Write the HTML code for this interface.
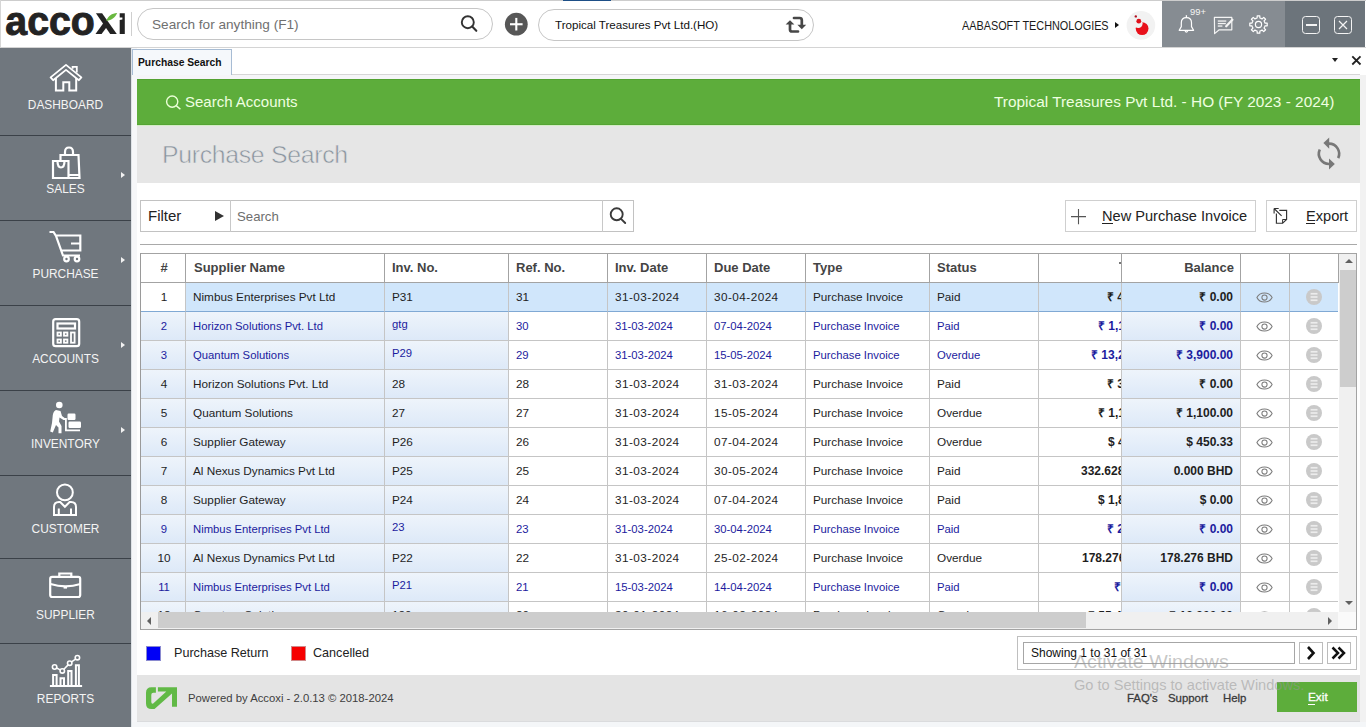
<!DOCTYPE html>
<html><head><meta charset="utf-8"><title>Purchase Search</title>
<style>
*{box-sizing:border-box}
html,body{margin:0;padding:0}
body{width:1366px;height:727px;overflow:hidden;position:relative;background:#fff;font-family:"Liberation Sans",sans-serif;color:#222}
.a{position:absolute}
.t{position:absolute;white-space:nowrap;line-height:1}
/* sidebar */
#side{position:absolute;left:0;top:48px;width:131px;height:679px;background:#70777e}
.sep{position:absolute;left:0;width:131px;height:1px;background:#3b4148}
.slab{position:absolute;left:0;width:131px;text-align:center;color:#f4f4f4;font-size:11.9px;line-height:1;white-space:nowrap}
.sarr{position:absolute;left:121px;width:0;height:0;border-top:3.5px solid transparent;border-bottom:3.5px solid transparent;border-left:4.5px solid #f2f2f2}
/* grid */
#grid{position:absolute;left:0;top:0;width:1366px;height:727px}
.hc{position:absolute;top:254px;height:29px;background:#fff;border-right:1px solid #a3a3a3;border-bottom:1px solid #a3a3a3}
.ht{position:absolute;top:260px;font-size:13px;font-weight:bold;color:#444;white-space:nowrap;line-height:15px}
.rw{position:absolute;left:0;width:1366px;height:29px}
.c{position:absolute;top:0;height:29px;border-right:1px solid #c5c5c5;border-bottom:1px solid #c5c5c5}
.wb{background:#fff}
.gb{background:linear-gradient(#eef4fb,#dde9f8)}
.sel .sb{background:#d0e6fb;border-bottom-color:#80a9d4}
.sel .wb{border-bottom-color:#80a9d4}
.tx{position:absolute;top:6px;font-size:11.75px;line-height:15px;color:#1e1e1e;white-space:nowrap}
.bl .tx{color:#1c1c9e;font-size:11.3px;top:6.5px}
.bl .up{top:4.5px}
.rw .dt{letter-spacing:0.45px}
.bl .dt{letter-spacing:0}
.mon{font-weight:bold;font-size:12px;top:7px}
.bl .mon{font-size:12px;top:7px}
.clipT{position:absolute;left:898px;top:0;width:82px;height:28px;overflow:hidden}
.clipT .tx{top:7px}
.ic{position:absolute;line-height:0}
.r12 .tx{top:4.5px}
.r12 .mon,.r12 .clipT .tx{top:6.5px}
</style></head>
<body>

<!-- ============ TOP BAR ============ -->
<div class="a" style="left:0;top:0;width:1366px;height:1px;background:#cdcdcd"></div>
<div class="a" style="left:0;top:0;width:1px;height:47px;background:#d6d6d6"></div>
<div class="a" style="left:563px;top:0;width:48px;height:1px;background:#1d4f87"></div>
<div class="a" style="left:0;top:47px;width:1366px;height:1px;background:#d4d4d4"></div>

<!-- logo -->
<svg class="a" style="left:0;top:0" width="135" height="47" viewBox="0 0 135 47">
  <text x="5.3" y="34.6" font-family="Liberation Sans" font-weight="bold" font-size="40.3" textLength="89.5" lengthAdjust="spacingAndGlyphs" fill="#232323" stroke="#232323" stroke-width="0.9">acco</text>
  <path d="M95.9 13.3 H102.1 L116.8 34 H110.2 Z" fill="#232323"/><path d="M95.5 34 H101.6 L108.6 24.6 L105.4 20.2 Z" fill="#232323"/>
  <path d="M106.3 21 C108.3 15.9 111.6 13.6 117.2 13.1 C115.2 17.6 112 20 106.3 21 Z" fill="#69b83f"/>
  <path d="M119.7 13.3 H124.8 V34 H119.7 V19.9 L122.4 19.5 V17.6 H119.7 Z" fill="#232323"/>
</svg>
<div class="a" style="left:131px;top:12px;width:1px;height:24px;background:#cfcfcf"></div>

<!-- search -->
<div class="a" style="left:137px;top:8px;width:356px;height:32px;border:1px solid #c6c6c6;border-radius:16px"></div>
<div class="t" style="left:152px;top:18px;font-size:13.6px;color:#707070">Search for anything (F1)</div>
<svg class="a" style="left:455px;top:10px" width="26" height="26" viewBox="0 0 26 26">
  <circle cx="12.8" cy="12.2" r="6" fill="none" stroke="#333" stroke-width="1.9"/>
  <line x1="17.2" y1="16.6" x2="21.3" y2="20.8" stroke="#333" stroke-width="2.1" stroke-linecap="round"/>
</svg>
<svg class="a" style="left:503px;top:11px" width="27" height="27" viewBox="0 0 27 27">
  <circle cx="13.3" cy="13.2" r="11.4" fill="#575757"/>
  <rect x="7" y="12.2" width="12.6" height="2.1" fill="#fff"/>
  <rect x="12.25" y="6.9" width="2.1" height="12.6" fill="#fff"/>
</svg>

<!-- company -->
<div class="a" style="left:538px;top:8.5px;width:276px;height:32px;border:1px solid #c6c6c6;border-radius:16px"></div>
<div class="t" style="left:555px;top:18.5px;font-size:11.6px;color:#111">Tropical Treasures Pvt Ltd.(HO)</div>
<svg class="a" style="left:782px;top:12px" width="26" height="24" viewBox="0 0 26 24">
  <path d="M8 11.5 V17.5 Q8 19.5 10 19.5 H16" fill="none" stroke="#474747" stroke-width="2.7" stroke-linecap="round"/>
  <path d="M3.6 12.6 L8 8.2 L12.4 12.6 Z" fill="#474747"/>
  <path d="M12 6 H17.6 Q19.8 6 19.8 8 V13.5" fill="none" stroke="#474747" stroke-width="2.7" stroke-linecap="round"/>
  <path d="M15.4 12.8 L19.8 17.2 L24.2 12.8 Z" fill="#474747"/>
</svg>

<!-- user -->
<div class="t" style="left:962px;top:20px;font-size:12.4px;color:#1a1a1a;transform:scaleX(0.875);transform-origin:0 0">AABASOFT TECHNOLOGIES</div>
<div class="a" style="left:1115px;top:21.5px;width:0;height:0;border-top:3.5px solid transparent;border-bottom:3.5px solid transparent;border-left:4.5px solid #111"></div>
<svg class="a" style="left:1126px;top:10px" width="30" height="31" viewBox="0 0 30 31">
  <circle cx="14.9" cy="15.4" r="14.3" fill="#f2f2f2"/>
  <circle cx="16.1" cy="18.6" r="6.4" fill="#e8101a"/>
  <circle cx="12.3" cy="13.6" r="4.3" fill="#f2f2f2"/>
  <circle cx="12.8" cy="11.2" r="2.4" fill="#e0101a"/>
  <circle cx="9.8" cy="6.4" r="1.2" fill="#b01020"/>
</svg>

<!-- right icon panels -->
<div class="a" style="left:1162px;top:1px;width:123px;height:46px;background:#868c92"></div>
<div class="a" style="left:1285px;top:1px;width:80px;height:46px;background:#6c747b"></div>
<div class="t" style="left:1190px;top:6.5px;font-size:9.4px;color:#f4f4f4">99+</div>
<svg class="a" style="left:1176px;top:12px" width="22" height="24" viewBox="0 0 22 24">
  <path d="M3.2 18.3 L5.3 14.6 V10.8 Q5.3 5.7 10.4 5.7 Q15.5 5.7 15.5 10.8 V14.6 L17.6 18.3 Z" fill="none" stroke="#fff" stroke-width="1.2" stroke-linejoin="round"/>
  <line x1="10.4" y1="3.2" x2="10.4" y2="5.6" stroke="#fff" stroke-width="1.3"/>
  <path d="M8.9 18.5 Q10.4 21.6 11.9 18.5" fill="none" stroke="#fff" stroke-width="1.2"/>
</svg>
<svg class="a" style="left:1212px;top:14px" width="24" height="22" viewBox="0 0 24 22">
  <path d="M2.4 3.4 H19.8 V15.8 H7.2 L2.6 19.6 Z" fill="none" stroke="#f4f4f4" stroke-width="1.2" stroke-linejoin="round"/>
  <rect x="5.8" y="6.4" width="8.5" height="1.3" fill="#f4f4f4"/>
  <rect x="5.8" y="8.9" width="8" height="1.3" fill="#f4f4f4"/>
  <rect x="5.8" y="11.4" width="4.6" height="1.3" fill="#f4f4f4"/>
  <path d="M14.2 12.2 L20.4 5.8" stroke="#f4f4f4" stroke-width="2.3" stroke-linecap="round"/>
</svg>
<svg class="a" style="left:1248px;top:14px" width="22" height="22" viewBox="0 0 22 22">
  <path id="gear" fill="none" stroke="#fff" stroke-width="1.2" stroke-linejoin="round" d="M7.97 4.40 L9.11 4.05 L9.19 1.80 L11.81 1.80 L11.89 4.05 L13.03 4.40 L14.08 4.96 L15.73 3.42 L17.58 5.27 L16.04 6.92 L16.60 7.97 L16.95 9.11 L19.20 9.19 L19.20 11.81 L16.95 11.89 L16.60 13.03 L16.04 14.08 L17.58 15.73 L15.73 17.58 L14.08 16.04 L13.03 16.60 L11.89 16.95 L11.81 19.20 L9.19 19.20 L9.11 16.95 L7.97 16.60 L6.92 16.04 L5.27 17.58 L3.42 15.73 L4.96 14.08 L4.40 13.03 L4.05 11.89 L1.80 11.81 L1.80 9.19 L4.05 9.11 L4.40 7.97 L4.96 6.92 L3.42 5.27 L5.27 3.42 L6.92 4.96 Z"/>
  <circle cx="10.5" cy="10.5" r="3.1" fill="none" stroke="#fff" stroke-width="1.2"/>
</svg>
<div class="a" style="left:1302px;top:16px;width:18px;height:18px;border:1.3px solid #f4f4f4;border-radius:3.5px"></div>
<div class="a" style="left:1305.5px;top:23.8px;width:11px;height:2.3px;background:#f4f4f4"></div>
<div class="a" style="left:1334px;top:16px;width:18px;height:18px;border:1.3px solid #f4f4f4;border-radius:3.5px"></div>
<svg class="a" style="left:1334px;top:16px" width="18" height="18" viewBox="0 0 18 18">
  <path d="M5 5 L13 13 M13 5 L5 13" stroke="#f4f4f4" stroke-width="1.2"/>
</svg>

<!-- ============ SIDEBAR ============ -->
<div id="side"></div>
<div class="sep" style="top:135px"></div>
<div class="sep" style="top:220px"></div>
<div class="sep" style="top:305px"></div>
<div class="sep" style="top:390px"></div>
<div class="sep" style="top:475px"></div>
<div class="sep" style="top:558px"></div>
<div class="sep" style="top:643px"></div>
<div class="slab" style="top:99.5px">DASHBOARD</div>
<div class="slab" style="top:184px">SALES</div>
<div class="slab" style="top:269px">PURCHASE</div>
<div class="slab" style="top:354px">ACCOUNTS</div>
<div class="slab" style="top:439px">INVENTORY</div>
<div class="slab" style="top:524px">CUSTOMER</div>
<div class="slab" style="top:609.5px">SUPPLIER</div>
<div class="slab" style="top:694px">REPORTS</div>
<div class="sarr" style="top:172px"></div>
<div class="sarr" style="top:257px"></div>
<div class="sarr" style="top:342px"></div>
<div class="sarr" style="top:427px"></div>

<!-- sidebar icons -->
<svg class="a" style="left:0;top:47px" width="131" height="680" viewBox="0 47 131 680" fill="none" stroke="#fff" stroke-width="2.2" stroke-linejoin="miter">
  <!-- house -->
  <path d="M50.6 77.4 L66 64.9 L81.4 77.4 L78.9 80.2 L66 69.9 L53.1 80.2 Z" stroke-width="1.8" stroke-linejoin="round"/><path d="M72.6 68.8 V66.9 H76.8 V72.6" stroke-width="1.8"/><path d="M55.9 78 V90.5 H63.3 V82.2 H69.3 V90.5 H76.2 V78" stroke-width="2"/>
  <!-- sales bags -->
  <path d="M53 161 H68.5 V178 H53 Z M57.5 161 Q57.5 167.5 61 167.5 Q64.5 167.5 64.5 161"/>
  <path d="M60.5 161 V155 H78.5 L79.5 178 H68.5 M68.5 175 H79.5 M65 155 V152 Q65 147.5 69 147.5 Q73 147.5 73 152 V155"/>
  <!-- cart -->
  <path d="M49.5 232 H53.5 L56 236 L63 255.5 H80 M55.5 235.5 H80.3 V250.5 H61.5 M71 243.5 H80"/>
  <circle cx="66.5" cy="259" r="2.3"/><circle cx="77" cy="259" r="2.3"/>
  <!-- calculator -->
  <rect x="53.2" y="319.2" width="26" height="27" rx="2.5"/>
  <rect x="57.5" y="323.5" width="17.5" height="5"/>
  <rect x="57.5" y="332.5" width="3.4" height="3.2" stroke-width="1.8"/>
  <rect x="64" y="332.5" width="3.4" height="3.2" stroke-width="1.8"/>
  <rect x="57.5" y="339.5" width="3.4" height="3.2" stroke-width="1.8"/>
  <rect x="64" y="339.5" width="3.4" height="3.2" stroke-width="1.8"/>
  <rect x="71" y="332.5" width="3.6" height="10.2" stroke-width="1.8"/>
  <!-- customer -->
  <circle cx="64.9" cy="492.4" r="7.9" stroke-width="2"/>
  <path d="M54 515 V507 Q54 502 59 502 H60.2 L64.9 506.8 L69.6 502 H71 Q76 502 76 507 V515 Z M58.8 508.5 V515 M71 508.5 V515" stroke-width="2"/>
  <!-- supplier -->
  <rect x="50.2" y="576.8" width="30" height="20.2" rx="2"/>
  <path d="M59.3 577.5 V573.5 H71.3 V577.5 M50.5 584 Q65.5 588.6 80.5 584"/><rect x="63.6" y="586" width="3.4" height="2.6" fill="#fff" stroke="none"/>
  <!-- reports -->
  <path d="M49.9 685.9 H82.1" stroke-width="2"/>
  <path d="M53.1 685 V674.9 H56.6 V685 M60.5 685 V678.2 H64 V685 M68.2 685 V671 H71.5 V685 M75.9 685 V665.3 H78.9 V685" stroke-width="2"/>
  <path d="M56.65 668.04 L60.25 669.86 M63.89 669.24 L68.11 664.86 M71.57 661.86 L75.53 659.04 " stroke-width="1.5"/>
  <circle cx="54.6" cy="667" r="2.2" stroke-width="1.6"/><circle cx="62.3" cy="670.9" r="2.2" stroke-width="1.6"/><circle cx="69.7" cy="663.2" r="2.2" stroke-width="1.6"/><circle cx="77.4" cy="657.7" r="2.2" stroke-width="1.6"/>
</svg>
<!-- inventory (filled) -->
<svg class="a" style="left:0;top:395px" width="131" height="50" viewBox="0 395 131 50">
  <g fill="#fff">
    <circle cx="59.3" cy="405" r="3.3"/>
    <path d="M56 410 Q53.5 411 52.8 415 L52 423 L50.2 431.5 L52.8 432.5 L56 425 L58.5 427.5 L58.5 433.3 H61.5 V426 L59 421.5 L59.5 417.5 L63.5 420 H65 V418.2 L62 416 L60.5 411 Z"/>
    <rect x="67.5" y="413.5" width="8" height="6.5" rx="1.2"/>
    <rect x="68.5" y="421.5" width="12.5" height="6.5" rx="1.2"/>
    <path d="M65 418 H66.8 V429.5 H80 V431.2 H65 Z"/>
  </g>
</svg>

<!-- ============ CONTENT ============ -->
<div class="a" style="left:131px;top:48px;width:1px;height:679px;background:#dfe3e7"></div>
<div class="a" style="left:132px;top:48px;width:5px;height:679px;background:#f6f7f9"></div>
<div class="a" style="left:1360px;top:75px;width:6px;height:652px;background:#f2f2f2"></div>
<div class="a" style="left:231px;top:74px;width:1129px;height:1px;background:#d6d6d6"></div>
<!-- tab -->
<div class="a" style="left:132px;top:49px;width:100px;height:26px;border:1px solid #a7bcd4;border-bottom:none;background:#f5f8fb"></div>
<div class="t" style="left:138px;top:58px;font-size:10.3px;font-weight:bold;color:#111">Purchase Search</div>
<div class="a" style="left:1332px;top:58px;width:0;height:0;border-left:3.5px solid transparent;border-right:3.5px solid transparent;border-top:4px solid #222"></div>
<svg class="a" style="left:1350px;top:54px" width="13" height="13" viewBox="0 0 13 13">
  <path d="M2.3 2.3 L10.5 10.5 M10.5 2.3 L2.3 10.5" stroke="#222" stroke-width="1.8"/>
</svg>

<!-- green bar -->
<div class="a" style="left:137px;top:75px;width:1223px;height:4px;background:#f5f5f8"></div>
<div class="a" style="left:137px;top:79px;width:1223px;height:46px;background:#5dad3b;border-top:1px solid #53a232;border-bottom:1px solid #55a434"></div>
<svg class="a" style="left:164px;top:93px" width="20" height="20" viewBox="0 0 20 20">
  <circle cx="8.2" cy="8.6" r="5.6" fill="none" stroke="#ecffd8" stroke-width="1.4"/>
  <line x1="12.2" y1="12.6" x2="16.4" y2="16.3" stroke="#ecffd8" stroke-width="1.5"/>
</svg>
<div class="t" style="left:185px;top:93.5px;font-size:15px;color:#efffe0">Search Accounts</div>
<div class="t" style="left:994px;top:93.5px;font-size:15.4px;color:#efffe0">Tropical Treasures Pvt Ltd. - HO (FY 2023 - 2024)</div>

<!-- grey header -->
<div class="a" style="left:137px;top:125px;width:1223px;height:1px;background:#d3ecc6"></div>
<div class="a" style="left:137px;top:126px;width:1223px;height:57px;background:#e6e6e6"></div>
<div class="t" style="left:162px;top:143px;font-size:24.8px;color:#8a949e;letter-spacing:-0.3px;-webkit-text-stroke:0.55px #e6e6e6">Purchase Search</div>
<svg class="a" style="left:1305px;top:130px" width="48" height="48" viewBox="0 0 48 48">
  <path d="M24 13.6 A10.2 10.2 0 0 1 33.2 28.1" fill="none" stroke="#787878" stroke-width="2.6"/>
  <path d="M18.4 13.1 L24.2 7.6 V18.8 Z" fill="#787878"/>
  <path d="M14.8 19.5 A10.2 10.2 0 0 0 24 34" fill="none" stroke="#787878" stroke-width="2.6"/>
  <path d="M29.8 34 L24 28.4 V39.6 Z" fill="#787878"/>
</svg>

<!-- filter row -->
<div class="a" style="left:140px;top:200px;width:494px;height:32px;border:1px solid #c2c2c2"></div>
<div class="a" style="left:230px;top:200px;width:1px;height:32px;background:#c8c8c8"></div>
<div class="a" style="left:602px;top:200px;width:1px;height:32px;background:#c8c8c8"></div>
<div class="t" style="left:148px;top:207.5px;font-size:15px;color:#222">Filter</div>
<div class="a" style="left:215px;top:211px;width:0;height:0;border-top:5px solid transparent;border-bottom:5px solid transparent;border-left:9px solid #333"></div>
<div class="t" style="left:237px;top:209.5px;font-size:13.2px;color:#6e6e6e">Search</div>
<svg class="a" style="left:606px;top:203px" width="24" height="24" viewBox="0 0 24 24">
  <circle cx="10.7" cy="11.3" r="6" fill="none" stroke="#3a3a3a" stroke-width="1.9"/>
  <line x1="15" y1="15.8" x2="19.2" y2="20" stroke="#3a3a3a" stroke-width="1.9" stroke-linecap="round"/>
</svg>

<div class="a" style="left:1065px;top:200px;width:191px;height:32px;border:1px solid #cfcfcf"></div>
<svg class="a" style="left:1070px;top:208px" width="18" height="18" viewBox="0 0 18 18">
  <path d="M1 8.6 H16 M8.5 1 V16.2" stroke="#555" stroke-width="1.1"/>
</svg>
<div class="t" style="left:1102px;top:208.5px;font-size:14.6px;color:#222">New Purchase Invoice</div>
<div class="a" style="left:1102px;top:223px;width:10.5px;height:1px;background:#222"></div>
<div class="a" style="left:1266px;top:200px;width:91px;height:32px;border:1px solid #cfcfcf"></div>
<svg class="a" style="left:1266px;top:202px" width="30" height="28" viewBox="0 0 30 28">
  <path d="M8.1 6.5 L15.6 13.9 M8.1 6.5 H12.7 M8.1 6.5 V11.4" fill="none" stroke="#333" stroke-width="1.15"/>
  <path d="M13.3 8.3 H20.6 V17.5 L16.6 21.2 H10.4 V11.6" fill="none" stroke="#333" stroke-width="1.15"/>
  <path d="M16.6 21.2 V17.5 H20.6" fill="none" stroke="#333" stroke-width="1"/>
</svg>
<div class="t" style="left:1306px;top:208.5px;font-size:14.6px;color:#222">Export</div>
<div class="a" style="left:1306px;top:223px;width:9px;height:1px;background:#222"></div>

<div class="a" style="left:140px;top:244px;width:1217px;height:1px;background:#a9a9a9"></div>

<!-- ============ TABLE ============ -->
<div class="a" style="left:140px;top:253px;width:1217px;height:377px;border:1px solid #a3a3a3;border-left:2px solid #9a9a9a"></div>
<div class="hc" style="left:141px;width:45px"></div><div class="hc" style="left:186px;width:199px"></div><div class="hc" style="left:385px;width:124px"></div><div class="hc" style="left:509px;width:99px"></div><div class="hc" style="left:608px;width:99px"></div><div class="hc" style="left:707px;width:99px"></div><div class="hc" style="left:806px;width:124px"></div><div class="hc" style="left:930px;width:109px"></div><div class="hc" style="left:1039px;width:83px"></div><div class="hc" style="left:1122px;width:119px"></div><div class="hc" style="left:1241px;width:49px"></div><div class="hc" style="left:1290px;width:49px"></div><span class="ht" style="left:142px;width:44px;text-align:center">#</span><span class="ht" style="left:194px">Supplier Name</span><span class="ht" style="left:392px">Inv. No.</span><span class="ht" style="left:516px">Ref. No.</span><span class="ht" style="left:615px">Inv. Date</span><span class="ht" style="left:714px">Due Date</span><span class="ht" style="left:813px">Type</span><span class="ht" style="left:937px">Status</span><span class="ht" style="left:1121px;width:113px;text-align:right">Balance</span><span class="a" style="left:1119px;top:262px;width:2px;height:2px;background:#777"></span>
<div class="a" style="left:141px;top:283px;width:1197px;height:329px;overflow:hidden">
<div class="rw sel" style="top:0px"><div class="c wb" style="left:0px;width:45px"></div><div class="c sb" style="left:45px;width:199px"></div><div class="c sb" style="left:244px;width:124px"></div><div class="c sb" style="left:368px;width:99px"></div><div class="c sb" style="left:467px;width:99px"></div><div class="c sb" style="left:566px;width:99px"></div><div class="c sb" style="left:665px;width:124px"></div><div class="c sb" style="left:789px;width:109px"></div><div class="c sb" style="left:898px;width:83px"></div><div class="c sb" style="left:981px;width:119px"></div><div class="c sb" style="left:1100px;width:49px"></div><div class="c sb" style="left:1149px;width:49px"></div><span class="tx" style="left:1px;width:44px;text-align:center">1</span><span class="tx" style="left:52px">Nimbus Enterprises Pvt Ltd</span><span class="tx" style="left:251px">P31</span><span class="tx" style="left:375px">31</span><span class="tx dt" style="left:474px">31-03-2024</span><span class="tx dt" style="left:573px">30-04-2024</span><span class="tx" style="left:672px">Purchase Invoice</span><span class="tx" style="left:796px">Paid</span><div class="clipT"><span class="tx mon" style="left:68px">₹ 4,130.00</span></div><span class="tx mon" style="left:980px;width:112px;text-align:right">₹ 0.00</span><span class="ic" style="left:1115px;top:9px"><svg width="17" height="11" viewBox="0 0 17 11"><path d="M0.9 5.5 C3.8 -0.6 13.2 -0.6 16.1 5.5 C13.2 11.6 3.8 11.6 0.9 5.5 Z" fill="none" stroke="#7c7c7c" stroke-width="1.05"/><circle cx="8.5" cy="5.5" r="2.6" fill="none" stroke="#7c7c7c" stroke-width="1.05"/></svg></span><span class="ic" style="left:1165px;top:6px"><svg width="16" height="16" viewBox="0 0 16 16"><circle cx="8" cy="8" r="8" fill="#c9c9c9"/><rect x="4.6" y="3.9" width="6.9" height="1.7" fill="#ececec"/><rect x="4.6" y="7.15" width="6.9" height="1.7" fill="#ececec"/><rect x="4.6" y="10.4" width="6.9" height="1.7" fill="#ececec"/></svg></span></div><div class="rw bl" style="top:29px"><div class="c gb" style="left:0px;width:45px"></div><div class="c gb" style="left:45px;width:199px"></div><div class="c gb" style="left:244px;width:124px"></div><div class="c wb" style="left:368px;width:99px"></div><div class="c wb" style="left:467px;width:99px"></div><div class="c wb" style="left:566px;width:99px"></div><div class="c wb" style="left:665px;width:124px"></div><div class="c wb" style="left:789px;width:109px"></div><div class="c wb" style="left:898px;width:83px"></div><div class="c gb" style="left:981px;width:119px"></div><div class="c wb" style="left:1100px;width:49px"></div><div class="c wb" style="left:1149px;width:49px"></div><span class="tx" style="left:1px;width:44px;text-align:center">2</span><span class="tx" style="left:52px">Horizon Solutions Pvt. Ltd</span><span class="tx up" style="left:251px">gtg</span><span class="tx" style="left:375px">30</span><span class="tx dt" style="left:474px">31-03-2024</span><span class="tx dt" style="left:573px">07-04-2024</span><span class="tx" style="left:672px">Purchase Invoice</span><span class="tx" style="left:796px">Paid</span><div class="clipT"><span class="tx mon" style="left:59px">₹ 1,180.00</span></div><span class="tx mon" style="left:980px;width:112px;text-align:right">₹ 0.00</span><span class="ic" style="left:1115px;top:9px"><svg width="17" height="11" viewBox="0 0 17 11"><path d="M0.9 5.5 C3.8 -0.6 13.2 -0.6 16.1 5.5 C13.2 11.6 3.8 11.6 0.9 5.5 Z" fill="none" stroke="#7c7c7c" stroke-width="1.05"/><circle cx="8.5" cy="5.5" r="2.6" fill="none" stroke="#7c7c7c" stroke-width="1.05"/></svg></span><span class="ic" style="left:1165px;top:6px"><svg width="16" height="16" viewBox="0 0 16 16"><circle cx="8" cy="8" r="8" fill="#c9c9c9"/><rect x="4.6" y="3.9" width="6.9" height="1.7" fill="#ececec"/><rect x="4.6" y="7.15" width="6.9" height="1.7" fill="#ececec"/><rect x="4.6" y="10.4" width="6.9" height="1.7" fill="#ececec"/></svg></span></div><div class="rw bl" style="top:58px"><div class="c gb" style="left:0px;width:45px"></div><div class="c gb" style="left:45px;width:199px"></div><div class="c gb" style="left:244px;width:124px"></div><div class="c wb" style="left:368px;width:99px"></div><div class="c wb" style="left:467px;width:99px"></div><div class="c wb" style="left:566px;width:99px"></div><div class="c wb" style="left:665px;width:124px"></div><div class="c wb" style="left:789px;width:109px"></div><div class="c wb" style="left:898px;width:83px"></div><div class="c gb" style="left:981px;width:119px"></div><div class="c wb" style="left:1100px;width:49px"></div><div class="c wb" style="left:1149px;width:49px"></div><span class="tx" style="left:1px;width:44px;text-align:center">3</span><span class="tx" style="left:52px">Quantum Solutions</span><span class="tx up" style="left:251px">P29</span><span class="tx" style="left:375px">29</span><span class="tx dt" style="left:474px">31-03-2024</span><span class="tx dt" style="left:573px">15-05-2024</span><span class="tx" style="left:672px">Purchase Invoice</span><span class="tx" style="left:796px">Overdue</span><div class="clipT"><span class="tx mon" style="left:52px">₹ 13,280.00</span></div><span class="tx mon" style="left:980px;width:112px;text-align:right">₹ 3,900.00</span><span class="ic" style="left:1115px;top:9px"><svg width="17" height="11" viewBox="0 0 17 11"><path d="M0.9 5.5 C3.8 -0.6 13.2 -0.6 16.1 5.5 C13.2 11.6 3.8 11.6 0.9 5.5 Z" fill="none" stroke="#7c7c7c" stroke-width="1.05"/><circle cx="8.5" cy="5.5" r="2.6" fill="none" stroke="#7c7c7c" stroke-width="1.05"/></svg></span><span class="ic" style="left:1165px;top:6px"><svg width="16" height="16" viewBox="0 0 16 16"><circle cx="8" cy="8" r="8" fill="#c9c9c9"/><rect x="4.6" y="3.9" width="6.9" height="1.7" fill="#ececec"/><rect x="4.6" y="7.15" width="6.9" height="1.7" fill="#ececec"/><rect x="4.6" y="10.4" width="6.9" height="1.7" fill="#ececec"/></svg></span></div><div class="rw" style="top:87px"><div class="c gb" style="left:0px;width:45px"></div><div class="c gb" style="left:45px;width:199px"></div><div class="c gb" style="left:244px;width:124px"></div><div class="c wb" style="left:368px;width:99px"></div><div class="c wb" style="left:467px;width:99px"></div><div class="c wb" style="left:566px;width:99px"></div><div class="c wb" style="left:665px;width:124px"></div><div class="c wb" style="left:789px;width:109px"></div><div class="c wb" style="left:898px;width:83px"></div><div class="c gb" style="left:981px;width:119px"></div><div class="c wb" style="left:1100px;width:49px"></div><div class="c wb" style="left:1149px;width:49px"></div><span class="tx" style="left:1px;width:44px;text-align:center">4</span><span class="tx" style="left:52px">Horizon Solutions Pvt. Ltd</span><span class="tx" style="left:251px">28</span><span class="tx" style="left:375px">28</span><span class="tx dt" style="left:474px">31-03-2024</span><span class="tx dt" style="left:573px">31-03-2024</span><span class="tx" style="left:672px">Purchase Invoice</span><span class="tx" style="left:796px">Paid</span><div class="clipT"><span class="tx mon" style="left:68px">₹ 3,540.00</span></div><span class="tx mon" style="left:980px;width:112px;text-align:right">₹ 0.00</span><span class="ic" style="left:1115px;top:9px"><svg width="17" height="11" viewBox="0 0 17 11"><path d="M0.9 5.5 C3.8 -0.6 13.2 -0.6 16.1 5.5 C13.2 11.6 3.8 11.6 0.9 5.5 Z" fill="none" stroke="#7c7c7c" stroke-width="1.05"/><circle cx="8.5" cy="5.5" r="2.6" fill="none" stroke="#7c7c7c" stroke-width="1.05"/></svg></span><span class="ic" style="left:1165px;top:6px"><svg width="16" height="16" viewBox="0 0 16 16"><circle cx="8" cy="8" r="8" fill="#c9c9c9"/><rect x="4.6" y="3.9" width="6.9" height="1.7" fill="#ececec"/><rect x="4.6" y="7.15" width="6.9" height="1.7" fill="#ececec"/><rect x="4.6" y="10.4" width="6.9" height="1.7" fill="#ececec"/></svg></span></div><div class="rw" style="top:116px"><div class="c gb" style="left:0px;width:45px"></div><div class="c gb" style="left:45px;width:199px"></div><div class="c gb" style="left:244px;width:124px"></div><div class="c wb" style="left:368px;width:99px"></div><div class="c wb" style="left:467px;width:99px"></div><div class="c wb" style="left:566px;width:99px"></div><div class="c wb" style="left:665px;width:124px"></div><div class="c wb" style="left:789px;width:109px"></div><div class="c wb" style="left:898px;width:83px"></div><div class="c gb" style="left:981px;width:119px"></div><div class="c wb" style="left:1100px;width:49px"></div><div class="c wb" style="left:1149px;width:49px"></div><span class="tx" style="left:1px;width:44px;text-align:center">5</span><span class="tx" style="left:52px">Quantum Solutions</span><span class="tx" style="left:251px">27</span><span class="tx" style="left:375px">27</span><span class="tx dt" style="left:474px">31-03-2024</span><span class="tx dt" style="left:573px">15-05-2024</span><span class="tx" style="left:672px">Purchase Invoice</span><span class="tx" style="left:796px">Overdue</span><div class="clipT"><span class="tx mon" style="left:59px">₹ 1,100.00</span></div><span class="tx mon" style="left:980px;width:112px;text-align:right">₹ 1,100.00</span><span class="ic" style="left:1115px;top:9px"><svg width="17" height="11" viewBox="0 0 17 11"><path d="M0.9 5.5 C3.8 -0.6 13.2 -0.6 16.1 5.5 C13.2 11.6 3.8 11.6 0.9 5.5 Z" fill="none" stroke="#7c7c7c" stroke-width="1.05"/><circle cx="8.5" cy="5.5" r="2.6" fill="none" stroke="#7c7c7c" stroke-width="1.05"/></svg></span><span class="ic" style="left:1165px;top:6px"><svg width="16" height="16" viewBox="0 0 16 16"><circle cx="8" cy="8" r="8" fill="#c9c9c9"/><rect x="4.6" y="3.9" width="6.9" height="1.7" fill="#ececec"/><rect x="4.6" y="7.15" width="6.9" height="1.7" fill="#ececec"/><rect x="4.6" y="10.4" width="6.9" height="1.7" fill="#ececec"/></svg></span></div><div class="rw" style="top:145px"><div class="c gb" style="left:0px;width:45px"></div><div class="c gb" style="left:45px;width:199px"></div><div class="c gb" style="left:244px;width:124px"></div><div class="c wb" style="left:368px;width:99px"></div><div class="c wb" style="left:467px;width:99px"></div><div class="c wb" style="left:566px;width:99px"></div><div class="c wb" style="left:665px;width:124px"></div><div class="c wb" style="left:789px;width:109px"></div><div class="c wb" style="left:898px;width:83px"></div><div class="c gb" style="left:981px;width:119px"></div><div class="c wb" style="left:1100px;width:49px"></div><div class="c wb" style="left:1149px;width:49px"></div><span class="tx" style="left:1px;width:44px;text-align:center">6</span><span class="tx" style="left:52px">Supplier Gateway</span><span class="tx" style="left:251px">P26</span><span class="tx" style="left:375px">26</span><span class="tx dt" style="left:474px">31-03-2024</span><span class="tx dt" style="left:573px">07-04-2024</span><span class="tx" style="left:672px">Purchase Invoice</span><span class="tx" style="left:796px">Overdue</span><div class="clipT"><span class="tx mon" style="left:69px">$ 450.33</span></div><span class="tx mon" style="left:980px;width:112px;text-align:right">$ 450.33</span><span class="ic" style="left:1115px;top:9px"><svg width="17" height="11" viewBox="0 0 17 11"><path d="M0.9 5.5 C3.8 -0.6 13.2 -0.6 16.1 5.5 C13.2 11.6 3.8 11.6 0.9 5.5 Z" fill="none" stroke="#7c7c7c" stroke-width="1.05"/><circle cx="8.5" cy="5.5" r="2.6" fill="none" stroke="#7c7c7c" stroke-width="1.05"/></svg></span><span class="ic" style="left:1165px;top:6px"><svg width="16" height="16" viewBox="0 0 16 16"><circle cx="8" cy="8" r="8" fill="#c9c9c9"/><rect x="4.6" y="3.9" width="6.9" height="1.7" fill="#ececec"/><rect x="4.6" y="7.15" width="6.9" height="1.7" fill="#ececec"/><rect x="4.6" y="10.4" width="6.9" height="1.7" fill="#ececec"/></svg></span></div><div class="rw" style="top:174px"><div class="c gb" style="left:0px;width:45px"></div><div class="c gb" style="left:45px;width:199px"></div><div class="c gb" style="left:244px;width:124px"></div><div class="c wb" style="left:368px;width:99px"></div><div class="c wb" style="left:467px;width:99px"></div><div class="c wb" style="left:566px;width:99px"></div><div class="c wb" style="left:665px;width:124px"></div><div class="c wb" style="left:789px;width:109px"></div><div class="c wb" style="left:898px;width:83px"></div><div class="c gb" style="left:981px;width:119px"></div><div class="c wb" style="left:1100px;width:49px"></div><div class="c wb" style="left:1149px;width:49px"></div><span class="tx" style="left:1px;width:44px;text-align:center">7</span><span class="tx" style="left:52px">Al Nexus Dynamics Pvt Ltd</span><span class="tx" style="left:251px">P25</span><span class="tx" style="left:375px">25</span><span class="tx dt" style="left:474px">31-03-2024</span><span class="tx dt" style="left:573px">30-05-2024</span><span class="tx" style="left:672px">Purchase Invoice</span><span class="tx" style="left:796px">Paid</span><div class="clipT"><span class="tx mon" style="left:42px">332.628 BHD</span></div><span class="tx mon" style="left:980px;width:112px;text-align:right">0.000 BHD</span><span class="ic" style="left:1115px;top:9px"><svg width="17" height="11" viewBox="0 0 17 11"><path d="M0.9 5.5 C3.8 -0.6 13.2 -0.6 16.1 5.5 C13.2 11.6 3.8 11.6 0.9 5.5 Z" fill="none" stroke="#7c7c7c" stroke-width="1.05"/><circle cx="8.5" cy="5.5" r="2.6" fill="none" stroke="#7c7c7c" stroke-width="1.05"/></svg></span><span class="ic" style="left:1165px;top:6px"><svg width="16" height="16" viewBox="0 0 16 16"><circle cx="8" cy="8" r="8" fill="#c9c9c9"/><rect x="4.6" y="3.9" width="6.9" height="1.7" fill="#ececec"/><rect x="4.6" y="7.15" width="6.9" height="1.7" fill="#ececec"/><rect x="4.6" y="10.4" width="6.9" height="1.7" fill="#ececec"/></svg></span></div><div class="rw" style="top:203px"><div class="c gb" style="left:0px;width:45px"></div><div class="c gb" style="left:45px;width:199px"></div><div class="c gb" style="left:244px;width:124px"></div><div class="c wb" style="left:368px;width:99px"></div><div class="c wb" style="left:467px;width:99px"></div><div class="c wb" style="left:566px;width:99px"></div><div class="c wb" style="left:665px;width:124px"></div><div class="c wb" style="left:789px;width:109px"></div><div class="c wb" style="left:898px;width:83px"></div><div class="c gb" style="left:981px;width:119px"></div><div class="c wb" style="left:1100px;width:49px"></div><div class="c wb" style="left:1149px;width:49px"></div><span class="tx" style="left:1px;width:44px;text-align:center">8</span><span class="tx" style="left:52px">Supplier Gateway</span><span class="tx" style="left:251px">P24</span><span class="tx" style="left:375px">24</span><span class="tx dt" style="left:474px">31-03-2024</span><span class="tx dt" style="left:573px">07-04-2024</span><span class="tx" style="left:672px">Purchase Invoice</span><span class="tx" style="left:796px">Paid</span><div class="clipT"><span class="tx mon" style="left:59px">$ 1,850.00</span></div><span class="tx mon" style="left:980px;width:112px;text-align:right">$ 0.00</span><span class="ic" style="left:1115px;top:9px"><svg width="17" height="11" viewBox="0 0 17 11"><path d="M0.9 5.5 C3.8 -0.6 13.2 -0.6 16.1 5.5 C13.2 11.6 3.8 11.6 0.9 5.5 Z" fill="none" stroke="#7c7c7c" stroke-width="1.05"/><circle cx="8.5" cy="5.5" r="2.6" fill="none" stroke="#7c7c7c" stroke-width="1.05"/></svg></span><span class="ic" style="left:1165px;top:6px"><svg width="16" height="16" viewBox="0 0 16 16"><circle cx="8" cy="8" r="8" fill="#c9c9c9"/><rect x="4.6" y="3.9" width="6.9" height="1.7" fill="#ececec"/><rect x="4.6" y="7.15" width="6.9" height="1.7" fill="#ececec"/><rect x="4.6" y="10.4" width="6.9" height="1.7" fill="#ececec"/></svg></span></div><div class="rw bl" style="top:232px"><div class="c gb" style="left:0px;width:45px"></div><div class="c gb" style="left:45px;width:199px"></div><div class="c gb" style="left:244px;width:124px"></div><div class="c wb" style="left:368px;width:99px"></div><div class="c wb" style="left:467px;width:99px"></div><div class="c wb" style="left:566px;width:99px"></div><div class="c wb" style="left:665px;width:124px"></div><div class="c wb" style="left:789px;width:109px"></div><div class="c wb" style="left:898px;width:83px"></div><div class="c gb" style="left:981px;width:119px"></div><div class="c wb" style="left:1100px;width:49px"></div><div class="c wb" style="left:1149px;width:49px"></div><span class="tx" style="left:1px;width:44px;text-align:center">9</span><span class="tx" style="left:52px">Nimbus Enterprises Pvt Ltd</span><span class="tx up" style="left:251px">23</span><span class="tx" style="left:375px">23</span><span class="tx dt" style="left:474px">31-03-2024</span><span class="tx dt" style="left:573px">30-04-2024</span><span class="tx" style="left:672px">Purchase Invoice</span><span class="tx" style="left:796px">Paid</span><div class="clipT"><span class="tx mon" style="left:68px">₹ 2,360.00</span></div><span class="tx mon" style="left:980px;width:112px;text-align:right">₹ 0.00</span><span class="ic" style="left:1115px;top:9px"><svg width="17" height="11" viewBox="0 0 17 11"><path d="M0.9 5.5 C3.8 -0.6 13.2 -0.6 16.1 5.5 C13.2 11.6 3.8 11.6 0.9 5.5 Z" fill="none" stroke="#7c7c7c" stroke-width="1.05"/><circle cx="8.5" cy="5.5" r="2.6" fill="none" stroke="#7c7c7c" stroke-width="1.05"/></svg></span><span class="ic" style="left:1165px;top:6px"><svg width="16" height="16" viewBox="0 0 16 16"><circle cx="8" cy="8" r="8" fill="#c9c9c9"/><rect x="4.6" y="3.9" width="6.9" height="1.7" fill="#ececec"/><rect x="4.6" y="7.15" width="6.9" height="1.7" fill="#ececec"/><rect x="4.6" y="10.4" width="6.9" height="1.7" fill="#ececec"/></svg></span></div><div class="rw" style="top:261px"><div class="c gb" style="left:0px;width:45px"></div><div class="c gb" style="left:45px;width:199px"></div><div class="c gb" style="left:244px;width:124px"></div><div class="c wb" style="left:368px;width:99px"></div><div class="c wb" style="left:467px;width:99px"></div><div class="c wb" style="left:566px;width:99px"></div><div class="c wb" style="left:665px;width:124px"></div><div class="c wb" style="left:789px;width:109px"></div><div class="c wb" style="left:898px;width:83px"></div><div class="c gb" style="left:981px;width:119px"></div><div class="c wb" style="left:1100px;width:49px"></div><div class="c wb" style="left:1149px;width:49px"></div><span class="tx" style="left:1px;width:44px;text-align:center">10</span><span class="tx" style="left:52px">Al Nexus Dynamics Pvt Ltd</span><span class="tx" style="left:251px">P22</span><span class="tx" style="left:375px">22</span><span class="tx dt" style="left:474px">31-03-2024</span><span class="tx dt" style="left:573px">25-02-2024</span><span class="tx" style="left:672px">Purchase Invoice</span><span class="tx" style="left:796px">Overdue</span><div class="clipT"><span class="tx mon" style="left:43px">178.276 BHD</span></div><span class="tx mon" style="left:980px;width:112px;text-align:right">178.276 BHD</span><span class="ic" style="left:1115px;top:9px"><svg width="17" height="11" viewBox="0 0 17 11"><path d="M0.9 5.5 C3.8 -0.6 13.2 -0.6 16.1 5.5 C13.2 11.6 3.8 11.6 0.9 5.5 Z" fill="none" stroke="#7c7c7c" stroke-width="1.05"/><circle cx="8.5" cy="5.5" r="2.6" fill="none" stroke="#7c7c7c" stroke-width="1.05"/></svg></span><span class="ic" style="left:1165px;top:6px"><svg width="16" height="16" viewBox="0 0 16 16"><circle cx="8" cy="8" r="8" fill="#c9c9c9"/><rect x="4.6" y="3.9" width="6.9" height="1.7" fill="#ececec"/><rect x="4.6" y="7.15" width="6.9" height="1.7" fill="#ececec"/><rect x="4.6" y="10.4" width="6.9" height="1.7" fill="#ececec"/></svg></span></div><div class="rw bl" style="top:290px"><div class="c gb" style="left:0px;width:45px"></div><div class="c gb" style="left:45px;width:199px"></div><div class="c gb" style="left:244px;width:124px"></div><div class="c wb" style="left:368px;width:99px"></div><div class="c wb" style="left:467px;width:99px"></div><div class="c wb" style="left:566px;width:99px"></div><div class="c wb" style="left:665px;width:124px"></div><div class="c wb" style="left:789px;width:109px"></div><div class="c wb" style="left:898px;width:83px"></div><div class="c gb" style="left:981px;width:119px"></div><div class="c wb" style="left:1100px;width:49px"></div><div class="c wb" style="left:1149px;width:49px"></div><span class="tx" style="left:1px;width:44px;text-align:center">11</span><span class="tx" style="left:52px">Nimbus Enterprises Pvt Ltd</span><span class="tx up" style="left:251px">P21</span><span class="tx" style="left:375px">21</span><span class="tx dt" style="left:474px">15-03-2024</span><span class="tx dt" style="left:573px">14-04-2024</span><span class="tx" style="left:672px">Purchase Invoice</span><span class="tx" style="left:796px">Paid</span><div class="clipT"><span class="tx mon" style="left:75px">₹ 590.00</span></div><span class="tx mon" style="left:980px;width:112px;text-align:right">₹ 0.00</span><span class="ic" style="left:1115px;top:9px"><svg width="17" height="11" viewBox="0 0 17 11"><path d="M0.9 5.5 C3.8 -0.6 13.2 -0.6 16.1 5.5 C13.2 11.6 3.8 11.6 0.9 5.5 Z" fill="none" stroke="#7c7c7c" stroke-width="1.05"/><circle cx="8.5" cy="5.5" r="2.6" fill="none" stroke="#7c7c7c" stroke-width="1.05"/></svg></span><span class="ic" style="left:1165px;top:6px"><svg width="16" height="16" viewBox="0 0 16 16"><circle cx="8" cy="8" r="8" fill="#c9c9c9"/><rect x="4.6" y="3.9" width="6.9" height="1.7" fill="#ececec"/><rect x="4.6" y="7.15" width="6.9" height="1.7" fill="#ececec"/><rect x="4.6" y="10.4" width="6.9" height="1.7" fill="#ececec"/></svg></span></div><div class="rw r12" style="top:319px"><div class="c gb" style="left:0px;width:45px"></div><div class="c gb" style="left:45px;width:199px"></div><div class="c gb" style="left:244px;width:124px"></div><div class="c wb" style="left:368px;width:99px"></div><div class="c wb" style="left:467px;width:99px"></div><div class="c wb" style="left:566px;width:99px"></div><div class="c wb" style="left:665px;width:124px"></div><div class="c wb" style="left:789px;width:109px"></div><div class="c wb" style="left:898px;width:83px"></div><div class="c gb" style="left:981px;width:119px"></div><div class="c wb" style="left:1100px;width:49px"></div><div class="c wb" style="left:1149px;width:49px"></div><span class="tx" style="left:1px;width:44px;text-align:center">12</span><span class="tx" style="left:52px">Quantum Solutions</span><span class="tx" style="left:251px">120</span><span class="tx" style="left:375px">20</span><span class="tx dt" style="left:474px">30-01-2024</span><span class="tx dt" style="left:573px">16-02-2024</span><span class="tx" style="left:672px">Purchase Invoice</span><span class="tx" style="left:796px">Overdue</span><div class="clipT"><span class="tx mon" style="left:49px">₹ 55,460.00</span></div><span class="tx mon" style="left:980px;width:112px;text-align:right">₹ 13,900.00</span><span class="ic" style="left:1115px;top:9px"><svg width="17" height="11" viewBox="0 0 17 11"><path d="M0.9 5.5 C3.8 -0.6 13.2 -0.6 16.1 5.5 C13.2 11.6 3.8 11.6 0.9 5.5 Z" fill="none" stroke="#7c7c7c" stroke-width="1.05"/><circle cx="8.5" cy="5.5" r="2.6" fill="none" stroke="#7c7c7c" stroke-width="1.05"/></svg></span><span class="ic" style="left:1165px;top:6px"><svg width="16" height="16" viewBox="0 0 16 16"><circle cx="8" cy="8" r="8" fill="#c9c9c9"/><rect x="4.6" y="3.9" width="6.9" height="1.7" fill="#ececec"/><rect x="4.6" y="7.15" width="6.9" height="1.7" fill="#ececec"/><rect x="4.6" y="10.4" width="6.9" height="1.7" fill="#ececec"/></svg></span></div>
</div>
<div class="a" style="left:1339px;top:254px;width:17px;height:358px;background:#f0f0f0"></div>
<div class="a" style="left:1340px;top:270px;width:16px;height:117px;background:#cdcdcd"></div>
<div class="a" style="left:1344.5px;top:258.5px;width:0;height:0;border-left:4px solid transparent;border-right:4px solid transparent;border-bottom:4px solid #606060"></div>
<div class="a" style="left:1344.5px;top:601px;width:0;height:0;border-left:4px solid transparent;border-right:4px solid transparent;border-top:4px solid #606060"></div>
<div class="a" style="left:141px;top:612px;width:1197px;height:17px;background:#f0f0f0"></div>
<div class="a" style="left:158px;top:612px;width:928px;height:16px;background:#cdcdcd"></div>
<div class="a" style="left:147px;top:617px;width:0;height:0;border-top:4px solid transparent;border-bottom:4px solid transparent;border-right:4px solid #606060"></div>
<div class="a" style="left:1328px;top:617px;width:0;height:0;border-top:4px solid transparent;border-bottom:4px solid transparent;border-left:4px solid #606060"></div>
<div class="a" style="left:1338px;top:612px;width:18px;height:17px;background:#fafafa"></div>


<!-- legend -->
<div class="a" style="left:146px;top:646px;width:15px;height:15px;background:#0000f6;border:1px solid #8a8ad0"></div>
<div class="t" style="left:174px;top:646.5px;font-size:12.6px;color:#222">Purchase Return</div>
<div class="a" style="left:291px;top:646px;width:15px;height:15px;background:#f60000;border:1px solid #d08a8a"></div>
<div class="t" style="left:313px;top:646.5px;font-size:12.6px;color:#222">Cancelled</div>

<!-- pagination -->
<div class="a" style="left:1017px;top:636px;width:340px;height:34px;border:1px solid #bfbfbf"></div>
<div class="a" style="left:1023px;top:642px;width:272px;height:22px;border:1px solid #a6a6a6"></div>
<div class="t" style="left:1031px;top:647px;font-size:12px;color:#111">Showing 1 to 31 of 31</div>
<div class="a" style="left:1299px;top:642px;width:24px;height:22px;border:1px solid #bcbcbc"></div>
<svg class="a" style="left:1299px;top:642px" width="24" height="22" viewBox="0 0 24 22">
  <path d="M9 5 L14.5 11 L9 17" fill="none" stroke="#111" stroke-width="2.6"/>
</svg>
<div class="a" style="left:1327px;top:642px;width:24px;height:22px;border:1px solid #bcbcbc"></div>
<svg class="a" style="left:1327px;top:642px" width="24" height="22" viewBox="0 0 24 22">
  <path d="M5.5 5.5 L11 11 L5.5 16.5 M11.5 5.5 L17 11 L11.5 16.5" fill="none" stroke="#111" stroke-width="2.5"/>
</svg>

<!-- footer -->
<div class="a" style="left:137px;top:675px;width:1223px;height:47px;background:#e4e4e4;border-bottom:1px solid #dadbdd"></div>
<div class="a" style="left:132px;top:722px;width:1234px;height:5px;background:#f4f6f8"></div>
<svg class="a" style="left:145px;top:686px" width="33" height="25" viewBox="0 0 33 25">
  <path d="M10.9 1.2 H6.5 Q1 1.2 1 6.7 V17.4 Q1 22.9 6.5 22.9 H9.5 L27 7.4 V20.7 H32 V1.2 H12.9 V5.6 H21.3 L8.2 17.6 Q6.3 18.2 6.3 15.8 V8.8 Q6.3 6.8 8.3 6.8 H10.9 Z" fill="#61b946"/>
</svg>
<div class="t" style="left:188px;top:693px;font-size:11.3px;color:#3e3e3e">Powered by Accoxi - 2.0.13 © 2018-2024</div>
<div class="t" style="left:1127px;top:693px;font-size:11.4px;color:#3a3a3a;-webkit-text-stroke:0.3px #3a3a3a">FAQ's</div>
<div class="t" style="left:1168px;top:693px;font-size:11.4px;color:#3a3a3a;-webkit-text-stroke:0.3px #3a3a3a">Support</div>
<div class="t" style="left:1223px;top:693px;font-size:11.4px;color:#3a3a3a;-webkit-text-stroke:0.3px #3a3a3a">Help</div>
<div class="a" style="left:1277px;top:682px;width:80px;height:30px;background:#5dad3b"></div>
<div class="t" style="left:1308px;top:692px;font-size:11.8px;color:#fff;-webkit-text-stroke:0.3px #fff">Exit</div>
<div class="a" style="left:1308px;top:704px;width:7px;height:1px;background:#fff"></div>

<!-- activate windows watermark -->
<div class="t" style="left:1074px;top:652.5px;font-size:18.5px;color:rgba(150,150,150,0.55);transform:scaleX(1.06);transform-origin:0 0">Activate Windows</div>
<div class="t" style="left:1074px;top:678px;font-size:14.6px;color:rgba(150,150,150,0.55)">Go to Settings to activate Windows.</div>


</body></html>
